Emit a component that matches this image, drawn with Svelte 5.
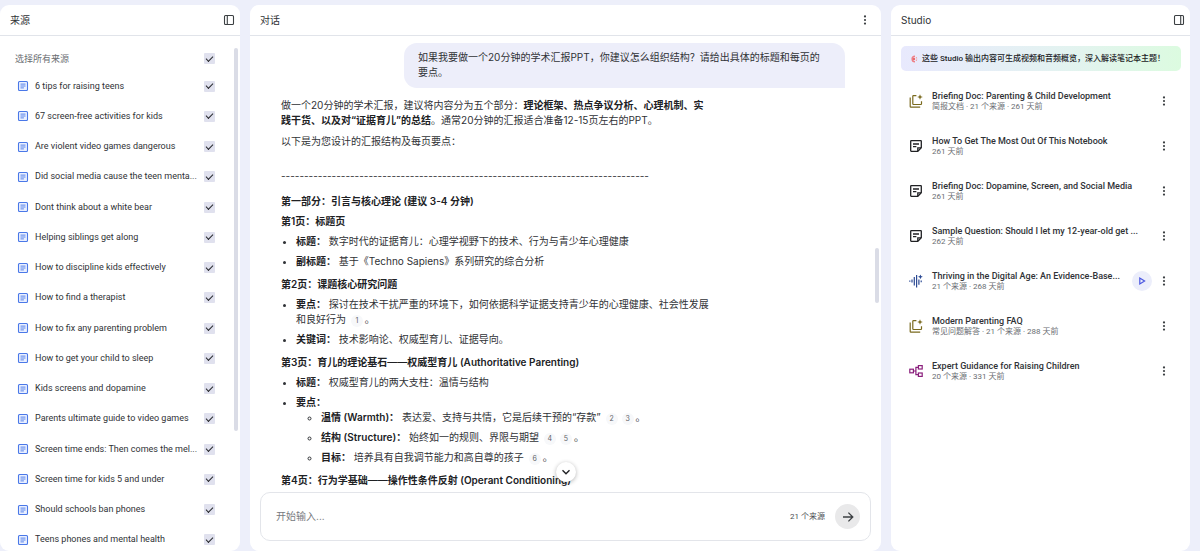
<script lang="ts">
  type StudioItem = {
    icon: "report" | "note" | "audio" | "map";
    title: string;
    meta: string;
    playable?: boolean;
  };

  const sources = [
    "6 tips for raising teens",
    "67 screen-free activities for kids",
    "Are violent video games dangerous",
    "Did social media cause the teen menta...",
    "Dont think about a white bear",
    "Helping siblings get along",
    "How to discipline kids effectively",
    "How to find a therapist",
    "How to fix any parenting problem",
    "How to get your child to sleep",
    "Kids screens and dopamine",
    "Parents ultimate guide to video games",
    "Screen time ends: Then comes the mel...",
    "Screen time for kids 5 and under",
    "Should schools ban phones",
    "Teens phones and mental health",
  ];

  const studio: StudioItem[] = [
    { icon: "report", title: "Briefing Doc: Parenting & Child Development", meta: "简报文档 · 21 个来源 · 261 天前" },
    { icon: "note", title: "How To Get The Most Out Of This Notebook", meta: "261 天前" },
    { icon: "note", title: "Briefing Doc: Dopamine, Screen, and Social Media", meta: "261 天前" },
    { icon: "note", title: "Sample Question: Should I let my 12-year-old get ...", meta: "262 天前" },
    { icon: "audio", title: "Thriving in the Digital Age: An Evidence-Base...", meta: "21 个来源 · 268 天前", playable: true },
    { icon: "report", title: "Modern Parenting FAQ", meta: "常见问题解答 · 21 个来源 · 288 天前" },
    { icon: "map", title: "Expert Guidance for Raising Children", meta: "20 个来源 · 331 天前" },
  ];

  let checked = $state(sources.map(() => true));
  let allChecked = $derived(checked.every(Boolean));
  let draft = $state("");

  function toggleAll() {
    const next = !allChecked;
    checked = checked.map(() => next);
  }
</script>

{#snippet cite(n: number)}<button class="cite">{n}</button>{/snippet}

{#snippet dots()}
  <svg viewBox="0 0 12 12" width="12" height="12" fill="#3c4043">
    <circle cx="6" cy="2.4" r="1.1" /><circle cx="6" cy="6" r="1.1" /><circle cx="6" cy="9.6" r="1.1" />
  </svg>
{/snippet}

<div class="app">
  <section class="panel">
    <header>
      <h2>来源</h2>
      <button class="icon" aria-label="收起来源">
        <svg viewBox="0 0 12 12" width="12" height="12" fill="none" stroke="#3c4043" stroke-width="1.1">
          <rect x="1.5" y="1.5" width="9" height="9" rx="1" /><path d="M4.3 1.5v9" />
        </svg>
      </button>
    </header>
    <div class="sources">
      <label class="all">
        <span class="name">选择所有来源</span>
        <input type="checkbox" checked={allChecked} onchange={toggleAll} />
      </label>
      <ul>
        {#each sources as name, i}
          <li>
            <label>
              <svg viewBox="0 0 12 12" width="12" height="12" fill="none" stroke="#4a78e8">
                <rect x="1.5" y="1.5" width="9" height="9" rx="1" fill="#eaf0ff" stroke-width="1.1" />
                <path d="M3.5 4.1h5M3.5 6h5M3.5 7.9h3.4" stroke-width=".9" />
              </svg>
              <span class="name">{name}</span>
              <input type="checkbox" bind:checked={checked[i]} />
            </label>
          </li>
        {/each}
      </ul>
      <div class="thumb"></div>
    </div>
  </section>

  <section class="panel chat">
    <header>
      <h2>对话</h2>
      <button class="icon" aria-label="更多选项">{@render dots()}</button>
    </header>
    <div class="messages">
      <div class="bubble">如果我要做一个20分钟的学术汇报PPT，你建议怎么组织结构？请给出具体的标题和每页的要点。</div>
      <div class="answer">
        <p>做一个20分钟的学术汇报，建议将内容分为五个部分：<b>理论框架、热点争议分析、心理机制、实践干货、以及对“证据育儿”的总结</b>。通常20分钟的汇报适合准备12-15页左右的PPT。</p>
        <p>以下是为您设计的汇报结构及每页要点：</p>
        <p class="rule">{"-".repeat(80)}</p>
        <h3>第一部分：引言与核心理论 (建议 3-4 分钟)</h3>
        <h3>第1页：标题页</h3>
        <ul>
          <li><b>标题：</b> 数字时代的证据育儿：心理学视野下的技术、行为与青少年心理健康</li>
          <li><b>副标题：</b> 基于《Techno Sapiens》系列研究的综合分析</li>
        </ul>
        <h3>第2页：课题核心研究问题</h3>
        <ul>
          <li><b>要点：</b> 探讨在技术干扰严重的环境下，如何依据科学证据支持青少年的心理健康、社会性发展和良好行为 {@render cite(1)}。</li>
          <li><b>关键词：</b> 技术影响论、权威型育儿、证据导向。</li>
        </ul>
        <h3>第3页：育儿的理论基石——权威型育儿 (Authoritative Parenting)</h3>
        <ul>
          <li><b>标题：</b> 权威型育儿的两大支柱：温情与结构</li>
          <li>
            <b>要点：</b>
            <ul>
              <li><b>温情 (Warmth)：</b> 表达爱、支持与共情，它是后续干预的“存款” {@render cite(2)}{@render cite(3)}。</li>
              <li><b>结构 (Structure)：</b> 始终如一的规则、界限与期望 {@render cite(4)}{@render cite(5)}。</li>
              <li><b>目标：</b> 培养具有自我调节能力和高自尊的孩子 {@render cite(6)}。</li>
            </ul>
          </li>
        </ul>
        <h3>第4页：行为学基础——操作性条件反射 (Operant Conditioning)</h3>
      </div>
      <div class="thumb"></div>
    </div>
    <div class="composer">
      <button class="jump" aria-label="跳到底部">
        <svg viewBox="0 0 12 12" width="12" height="12" fill="none" stroke="#202124" stroke-width="1.4">
          <path d="M2.5 4.3 6 7.8l3.5-3.5" />
        </svg>
      </button>
      <input type="text" placeholder="开始输入..." aria-label="开始输入" bind:value={draft} />
      <span class="count">21 个来源</span>
      <button class="send" aria-label="发送">
        <svg viewBox="0 0 14 14" width="14" height="14" fill="none" stroke="#3c4043" stroke-width="1.3">
          <path d="M2 7h9.6M7.4 2.6 11.8 7l-4.4 4.4" />
        </svg>
      </button>
    </div>
  </section>

  <section class="panel">
    <header>
      <h2>Studio</h2>
      <button class="icon" aria-label="收起 Studio">
        <svg viewBox="0 0 12 12" width="12" height="12" fill="none" stroke="#3c4043" stroke-width="1.1">
          <rect x="1.5" y="1.5" width="9" height="9" rx="1" /><path d="M7.7 1.5v9" />
        </svg>
      </button>
    </header>
    <div class="banner">
      <svg viewBox="0 0 8 8" width="8" height="8" fill="none">
        <path d="M5 1.2A2.8 2.8 0 1 0 5 6.8" stroke="#ee7f86" stroke-width="1.6" />
        <circle cx="4" cy="4" r="1.2" fill="#e8686c" />
        <path d="M6.4 2v1M7.2 4H6M6.4 5v1" stroke="#f2a0a3" stroke-width="1" />
      </svg>
      <span>这些 Studio 输出内容可生成视频和音频概览，深入解读笔记本主题！</span>
    </div>
    <ul class="studio">
      {#each studio as item}
        <li>
          <svg class="kind" viewBox="0 0 14 14" width="14" height="14" fill="none">
            {#if item.icon === "report"}
              <g stroke="#7a6a1e" stroke-width="1.2">
                <path d="M7.4 1.6H4.5a.7.7 0 0 0-.7.7v7.5c0 .4.3.7.7.7h7.3c.4 0 .7-.3.7-.7V7.2" />
                <path d="M1.2 3.6v8.8c0 .4.3.7.7.7h9.3" />
              </g>
              <path d="M11 .2l.8 2 2 .8-2 .8-.8 2-.8-2-2-.8 2-.8z" fill="#7a6a1e" />
            {:else if item.icon === "note"}
              <g stroke="#202124" stroke-width="1.3">
                <path d="M2.2 1.7h9.6c.3 0 .5.2.5.5v6.6l-3.5 3.5H2.2a.5.5 0 0 1-.5-.5V2.2c0-.3.2-.5.5-.5z" />
                <path d="M4 5h6M4 7.6h3.4M8.8 12V8.8H12" />
              </g>
            {:else if item.icon === "audio"}
              <path d="M.8 6.6v1.2M3 5.6v3M5.3 3v8.4M7.6 1v12.4M9.9 5.4v5.4M12.2 6.6v1.6" stroke="#2c4a94" stroke-width="1.2" />
              <path d="M11.4.4l.7 1.7 1.7.7-1.7.7-.7 1.7-.7-1.7L9 2.8l1.7-.7z" fill="#2c4a94" />
            {:else}
              <g stroke="#8a1f7c" stroke-width="1.2">
                <rect x=".8" y="5.2" width="3.6" height="3.6" />
                <rect x="9.4" y="1.6" width="3.8" height="3.4" />
                <rect x="9.4" y="9" width="3.8" height="3.4" />
                <path d="M4.4 7h2.5M9.4 3.3H6.9v7.4h2.5" />
              </g>
            {/if}
          </svg>
          <div class="text">
            <a href="#studio">{item.title}</a>
            <span class="meta">{item.meta}</span>
          </div>
          {#if item.playable}
            <button class="play" aria-label="播放">
              <svg viewBox="0 0 10 10" width="10" height="10" fill="none" stroke="#4a56e0" stroke-width="1.2">
                <path d="M2.8 2v6L7.6 5z" />
              </svg>
            </button>
          {/if}
          <button class="icon" aria-label="更多">{@render dots()}</button>
        </li>
      {/each}
    </ul>
  </section>
</div>

<style>
  :global(body) {
    background: #edeffa;
  }
  .app {
    box-sizing: border-box;
    height: 100vh;
    display: grid;
    grid-template-columns: 240px minmax(0, 1fr) 299px;
    gap: 10px;
    padding: 5px 10px 0 0;
    font: 10px/15px Inter, "Noto Sans CJK SC", sans-serif;
    color: #303236;
  }
  .panel {
    display: flex;
    flex-direction: column;
    min-height: 0;
    overflow: hidden;
    background: #fff;
    border-radius: 9px;
  }
  header {
    display: flex;
    align-items: center;
    justify-content: space-between;
    height: 30px;
    flex-shrink: 0;
    padding: 0 5px 0 10px;
    border-bottom: 1px solid #e1e4ea;
  }
  h2,
  h3,
  p,
  ul {
    margin: 0;
    padding: 0;
    font-size: inherit;
  }
  h2 {
    font-size: 10px;
    font-weight: 400;
  }
  svg {
    display: block;
    flex-shrink: 0;
  }
  button {
    display: flex;
    align-items: center;
    justify-content: center;
    border: none;
    padding: 0;
    background: none;
    font: inherit;
    color: inherit;
  }
  .chat header {
    padding-right: 10px;
  }
  .thumb {
    position: absolute;
    right: 2px;
    width: 4px;
    border-radius: 2px;
    background: #dadce6;
  }

  .sources {
    position: relative;
    flex: 1;
    min-height: 0;
    display: flex;
    flex-direction: column;
    padding: 10px 25px 0 15px;
  }
  .sources .thumb {
    top: 12px;
    height: 383px;
  }
  .sources label {
    display: flex;
    align-items: center;
    height: 100%;
  }
  .sources .all {
    height: 25px;
    color: #6a6d72;
    font-size: 9px;
  }
  .sources ul {
    flex: 1;
    display: grid;
    grid-template-columns: minmax(0, 1fr);
    grid-auto-rows: minmax(30px, 1fr);
    list-style: none;
    padding-left: 2px;
    margin-bottom: -4px;
  }
  .sources li {
    font-family: Roboto, "Noto Sans CJK SC", sans-serif;
    font-size: 9px;
  }
  .sources li .name {
    margin-left: 6px;
  }
  .name {
    flex: 1;
    min-width: 0;
    white-space: nowrap;
  }
  .sources input {
    appearance: none;
    flex-shrink: 0;
    width: 11px;
    height: 11px;
    margin: 0;
    border-radius: 1px;
    background: #e0e1ee;
    display: grid;
    place-items: center;
  }
  .sources input:checked::before {
    content: "";
    width: 6px;
    height: 3px;
    border: solid #26282c;
    border-width: 0 0 1px 1px;
    transform: translateY(-1px) rotate(-45deg);
  }

  .messages {
    position: relative;
    flex: 1;
    min-height: 0;
    overflow: hidden;
    padding: 7px 36px 0 31px;
  }
  .messages .thumb {
    top: 212px;
    height: 55px;
  }
  .bubble {
    box-sizing: border-box;
    width: 441px;
    max-width: 100%;
    margin-left: auto;
    padding: 7px 20px 8px 14px;
    border-radius: 13px 13px 0 13px;
    background: #edeefa;
  }
  .answer {
    max-width: 430px;
    padding-top: 10px;
  }
  .answer p {
    margin-bottom: 6px;
  }
  .answer .rule {
    margin: 20px 0 10px;
    white-space: nowrap;
  }
  b,
  h3 {
    font-weight: 600;
    color: #202124;
  }
  h3 {
    margin-bottom: 5px;
    white-space: nowrap;
  }
  .answer ul {
    padding-left: 15px;
    margin-bottom: 8px;
  }
  .answer li {
    margin-bottom: 5px;
  }
  .answer li ul {
    padding-left: 25px;
  }
  .cite {
    display: inline-flex;
    width: 12px;
    height: 12px;
    margin: 0 2px;
    border-radius: 50%;
    background: #f7f8fa;
    font-size: 7px;
    line-height: 12px;
    color: #5f6368;
  }
  .composer {
    position: relative;
    box-sizing: border-box;
    display: flex;
    align-items: center;
    height: 49px;
    flex-shrink: 0;
    margin: 4px 10px 10px;
    padding: 0 10px 0 15px;
    border: 1px solid #e3e5ea;
    border-radius: 10px;
  }
  .composer input {
    flex: 1;
    min-width: 0;
    border: none;
    outline: none;
    padding: 0;
    background: none;
    font: inherit;
    color: inherit;
  }
  .composer input::placeholder {
    color: #77797d;
  }
  .count {
    margin-right: 10px;
    font-family: Roboto, "Noto Sans CJK SC", sans-serif;
    font-size: 8px;
    color: #4b4e52;
  }
  .send {
    width: 25px;
    height: 25px;
    border-radius: 50%;
    background: #e9e9ea;
  }
  .jump {
    position: absolute;
    left: 50%;
    bottom: 58px;
    width: 20px;
    height: 20px;
    margin-left: -10px;
    border-radius: 50%;
    background: #fff;
    box-shadow: 0 1px 4px rgba(0, 0, 0, 0.3);
  }

  .banner {
    display: flex;
    align-items: center;
    gap: 4px;
    height: 25px;
    margin: 10px 9px 0 10px;
    padding: 0 10px 0 9px;
    border-radius: 5px;
    background: linear-gradient(90deg, #e8e9fd, #e3f3f0 60%, #dcfbe0);
    font-family: Roboto, "Noto Sans CJK SC", sans-serif;
    font-size: 8px;
    font-weight: 500;
    color: #202124;
    white-space: nowrap;
  }
  .studio {
    list-style: none;
    padding: 7px 20px 0 18px;
    font-family: Roboto, "Noto Sans CJK SC", sans-serif;
  }
  .studio li {
    display: flex;
    align-items: center;
    height: 45px;
  }
  .kind {
    margin-right: 9px;
  }
  .text {
    flex: 1;
    min-width: 0;
    display: flex;
    flex-direction: column;
    white-space: nowrap;
  }
  .text a {
    font-size: 9px;
    line-height: 12px;
    font-weight: 500;
    color: #303236;
    text-decoration: none;
  }
  .meta {
    font-size: 8px;
    line-height: 10px;
    color: #6a6d72;
  }
  .play {
    width: 20px;
    height: 20px;
    margin-right: 6px;
    border-radius: 50%;
    background: #eceefb;
  }
</style>
